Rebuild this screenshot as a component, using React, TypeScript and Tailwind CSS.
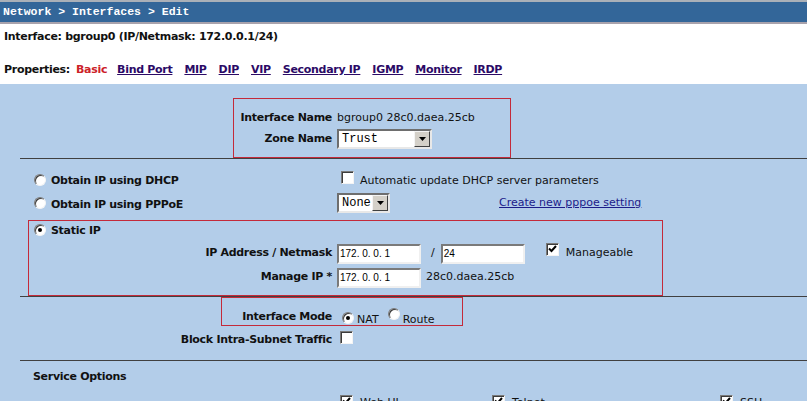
import React from "react";

const sans = "font-['DejaVu_Sans',Verdana,sans-serif]";
const b = "font-bold tracking-[-0.3px]";

function Radio({ checked = false }: { checked?: boolean }) {
  return (
    <span className="inline-flex h-[12px] w-[12px] shrink-0 items-center justify-center rounded-full border border-b-[#f4f4f4] border-l-[#7a7a7a] border-r-[#f4f4f4] border-t-[#7a7a7a] bg-white shadow-[inset_1px_1px_0_#3c3c3c]">
      {checked && <span className="h-[4px] w-[4px] rounded-full bg-black" />}
    </span>
  );
}

function Checkbox({ checked = false }: { checked?: boolean }) {
  return (
    <span className="inline-flex h-[13px] w-[13px] shrink-0 items-start justify-center border border-b-[#f4f4f4] border-l-[#7a7a7a] border-r-[#f4f4f4] border-t-[#7a7a7a] bg-white shadow-[inset_1px_1px_0_#3c3c3c]">
      {checked && (
        <svg width="9" height="9" viewBox="0 0 9 9" className="mt-[1px]">
          <path d="M1 3.5 L3.5 6 L8 1" fill="none" stroke="#000" strokeWidth="2" />
        </svg>
      )}
    </span>
  );
}

function Select({ value, width }: { value: string; width: string }) {
  return (
    <span className={`inline-flex h-[20px] items-stretch border-2 border-b-[#e8e8e8] border-l-[#6e6e6e] border-r-[#e8e8e8] border-t-[#6e6e6e] bg-white ${width}`}>
      <span className="flex flex-1 items-center pl-[3px] font-['Liberation_Mono',monospace] text-[12px] text-black">{value}</span>
      <span className="flex w-[16px] items-center justify-center border border-b-[#404040] border-l-[#f4f4f4] border-r-[#404040] border-t-[#f4f4f4] bg-[#d4d0c8]">
        <svg width="7" height="4" viewBox="0 0 7 4">
          <path d="M0 0 H7 L3.5 4 Z" fill="#000" />
        </svg>
      </span>
    </span>
  );
}

function TextInput({ value, width }: { value: string; width: string }) {
  return (
    <span className={`inline-flex h-[20px] items-center border-2 border-b-[#f0f0f0] border-l-[#7a7a7a] border-r-[#f0f0f0] border-t-[#7a7a7a] bg-white pl-[1px] font-['Liberation_Sans',sans-serif] text-[10px] text-black ${width}`}>
      {value}
    </span>
  );
}

const links = ["Bind Port", "MIP", "DIP", "VIP", "Secondary IP", "IGMP", "Monitor", "IRDP"];

export default function App() {
  return (
    <div className={`h-[401px] w-[807px] overflow-hidden bg-[#b3cde9] text-[11px] text-[#111] ${sans}`}>
      {/* header bar */}
      <div className="h-[2px] bg-[#aab0b8]" />
      <div className="flex h-[20px] items-center bg-[#336699] pl-[3px] font-['Liberation_Mono',monospace] text-[11.5px] font-bold text-white">
        Network &gt; Interfaces &gt; Edit
      </div>
      <div className="h-[2px] bg-[#a8a2ac]" />

      <div className="bg-white pb-[7px] pl-[4px] pt-[6px]">
        <div className={`h-[14px] leading-[14px] ${b}`}>Interface: bgroup0 (IP/Netmask: 172.0.0.1/24)</div>
        <div className={`mt-[19px] flex h-[14px] items-center leading-[14px] ${b}`}>
          <span className="mr-[6px]">Properties:</span>
          <span className="mr-[10px] text-[#cc2229]">Basic</span>
          {links.map((l) => (
            <a key={l} href="#" className="mr-[12px] text-[#2b0a66] underline">
              {l}
            </a>
          ))}
        </div>
      </div>

      <div className="pl-[20px]">
        {/* name / zone */}
        <div className="pt-[14px]">
          <div className="ml-[213px] h-[60px] w-[278px] border border-[#c42a3a] pt-[10px]">
            <div className="grid grid-cols-[98px_1fr] items-center gap-x-[5px] gap-y-[2px]">
              <span className={`h-[18px] text-right leading-[18px] ${b}`}>Interface Name</span>
              <span className="leading-[18px]">bgroup0 28c0.daea.25cb</span>
              <span className={`text-right ${b}`}>Zone Name</span>
              <Select value="Trust" width="w-[95px]" />
            </div>
          </div>
        </div>

        {/* ip mode */}
        <div className="border-t border-[#404040] pt-[11px]">
          <div className="flex h-[20px] items-center">
            <div className="flex w-[317px] items-center pl-[14px]">
              <Radio />
              <span className={`ml-[5px] mt-[2px] ${b}`}>Obtain IP using DHCP</span>
            </div>
            <span className="ml-[4px]">
              <Checkbox />
            </span>
            <span className="ml-[6px] mt-[2px]">Automatic update DHCP server parameters</span>
          </div>
          <div className="mt-[2px] flex h-[22px] items-center">
            <div className="flex w-[317px] items-center pl-[14px]">
              <Radio />
              <span className={`ml-[5px] mt-[4px] ${b}`}>Obtain IP using PPPoE</span>
            </div>
            <Select value="None" width="w-[53px]" />
            <a href="#" className="ml-[109px] mt-[1px] text-[#1c1c8a] underline">
              Create new pppoe setting
            </a>
          </div>

          <div className="ml-[8px] mt-[6px] w-[635px] border border-[#c42a3a] pb-[7px]">
            <div className="flex h-[17px] items-center pl-[5px]">
              <Radio checked />
              <span className={`ml-[5px] mt-[3px] ${b}`}>Static IP</span>
            </div>
            <div className="mt-[5px] grid grid-cols-[303px_1fr] items-center gap-x-[5px] gap-y-[3px]">
              <span className={`text-right ${b}`}>IP Address / Netmask</span>
              <div className="flex h-[21px] items-center">
                <TextInput value="172. 0. 0. 1" width="w-[84px]" />
                <span className="ml-[10px]">/</span>
                <span className="ml-[6px]">
                  <TextInput value="24" width="w-[84px]" />
                </span>
                <span className="mb-[4px] ml-[21px]">
                  <Checkbox checked />
                </span>
                <span className="ml-[7px]">Manageable</span>
              </div>
              <span className={`text-right ${b}`}>Manage IP *</span>
              <div className="flex h-[21px] items-center">
                <TextInput value="172. 0. 0. 1" width="w-[84px]" />
                <span className="ml-[5px]">28c0.daea.25cb</span>
              </div>
            </div>
          </div>
        </div>

        {/* interface mode */}
        <div className="border-t border-[#404040]">
          <div className="ml-[201px] h-[29px] w-[242px] border border-[#c42a3a] pt-[11px]">
            <div className="flex h-[16px] items-center">
              <span className={`w-[110px] text-right ${b}`}>Interface Mode</span>
              <span className="ml-[10px]">
                <Radio checked />
              </span>
              <span className="ml-[3px] mt-[7px]">NAT</span>
              <span className="ml-[9px]">
                <Radio />
              </span>
              <span className="ml-[3px] mt-[7px]">Route</span>
            </div>
          </div>
          <div className="mt-[6px] flex h-[16px] items-center">
            <span className={`w-[312px] text-right ${b}`}>Block Intra-Subnet Traffic</span>
            <span className="ml-[8px]">
              <Checkbox />
            </span>
          </div>
        </div>

        {/* service options */}
        <div className="mt-[12px] border-t border-[#404040] pt-[8px]">
          <div className={`flex h-[16px] items-center pl-[13px] ${b}`}>Service Options</div>
          <div className="mt-[6px] grid h-[16px] grid-cols-[320px_152px_228px_1fr] items-center">
            <span />
            <div className="flex items-center">
              <Checkbox checked />
              <span className="ml-[7px] mt-[4px]">Web UI</span>
            </div>
            <div className="flex items-center">
              <Checkbox checked />
              <span className="ml-[7px] mt-[4px]">Telnet</span>
            </div>
            <div className="flex items-center">
              <Checkbox checked />
              <span className="ml-[7px] mt-[4px]">SSH</span>
            </div>
          </div>
        </div>
      </div>
    </div>
  );
}
